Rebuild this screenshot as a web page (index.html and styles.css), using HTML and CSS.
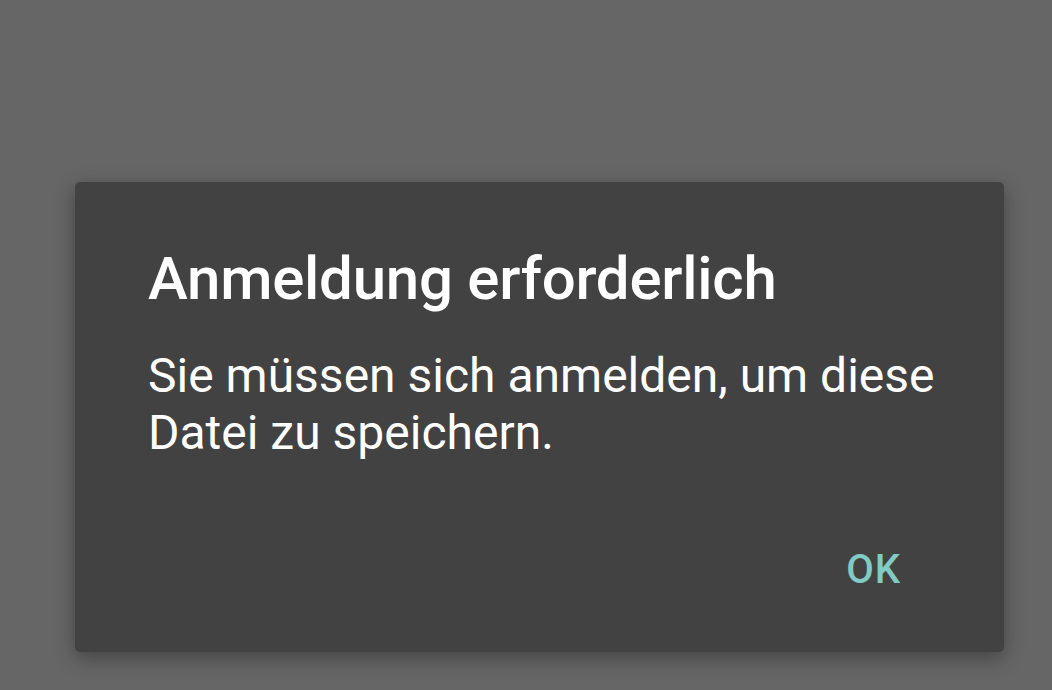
FILE: index.html
```html
<!DOCTYPE html>
<html lang="de">
  <head>
    <meta charset="UTF-8" />
    <title>Anmeldung erforderlich</title>
    <link rel="stylesheet" href="styles.css">
  </head>
  <body>
    <div class="overlay">
      <div class="dialog">
        <h2 class="dialog-title">Anmeldung erforderlich</h2>
        <p class="dialog-text">Sie müssen sich anmelden, um diese Datei zu speichern.</p>
        <div class="dialog-actions">
          <button class="btn-ok">OK</button>
        </div>
      </div>
    </div>
  </body>
</html>
```

FILE: styles.css
```css
body {
  margin: 0;
  background-color: #666666;
  font-family: Roboto, "Noto Sans", sans-serif;
  color: #fff;
}

.overlay {
  width: 1052px;
  height: 690px;
  padding: 182px 0 0 75px;
  box-sizing: border-box;
}

.dialog {
  width: 929px;
  height: 470px;
  box-sizing: border-box;
  background-color: #424242;
  border-radius: 5px;
  box-shadow: 0 6px 20px rgba(0, 0, 0, 0.35);
  padding: 62px 73px 0 73px;
  display: flex;
  flex-direction: column;
}

.dialog-title {
  margin: 0;
  font-size: 60px;
  font-weight: 500;
  line-height: 70px;
  letter-spacing: -0.25px;
}

.dialog-text {
  margin: 33px 0 0 0;
  font-size: 48px;
  line-height: 57px;
  width: 800px;
}

.dialog-actions {
  display: flex;
  justify-content: flex-end;
  margin-top: auto;
  padding-bottom: 59px;
}

.btn-ok {
  background: none;
  border: none;
  padding: 0;
  margin-right: 30px;
  font-family: Roboto, "Noto Sans", sans-serif;
  font-size: 40px;
  font-weight: 500;
  line-height: 47px;
  letter-spacing: 1px;
  color: #80cbc4;
  cursor: pointer;
}
```
